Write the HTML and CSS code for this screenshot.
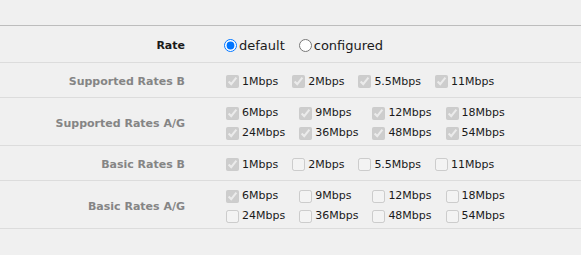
FILE: index.html
```html
<!DOCTYPE html>
<html lang="en">
<head>
  <meta charset="UTF-8">
  <meta name="viewport" content="width=device-width, initial-scale=1.0">
  <title>Rate Settings</title>
  <link rel="stylesheet" href="styles.css">
</head>
<body>
  <div class="panel">
    <div class="row row-rate">
      <div class="row-label label-dark">Rate</div>
      <div class="row-control">
        <label class="radio"><input type="radio" name="rate" checked>default</label>
        <label class="radio"><input type="radio" name="rate">configured</label>
      </div>
    </div>

    <div class="row">
      <div class="row-label">Supported Rates B</div>
      <div class="row-control">
        <label class="check"><input type="checkbox" checked disabled>1Mbps</label>
        <label class="check"><input type="checkbox" checked disabled>2Mbps</label>
        <label class="check"><input type="checkbox" checked disabled>5.5Mbps</label>
        <label class="check"><input type="checkbox" checked disabled>11Mbps</label>
      </div>
    </div>

    <div class="row">
      <div class="row-label">Supported Rates A/G</div>
      <div class="row-control rate-grid">
        <label class="check"><input type="checkbox" checked disabled>6Mbps</label>
        <label class="check"><input type="checkbox" checked disabled>9Mbps</label>
        <label class="check"><input type="checkbox" checked disabled>12Mbps</label>
        <label class="check"><input type="checkbox" checked disabled>18Mbps</label>
        <label class="check"><input type="checkbox" checked disabled>24Mbps</label>
        <label class="check"><input type="checkbox" checked disabled>36Mbps</label>
        <label class="check"><input type="checkbox" checked disabled>48Mbps</label>
        <label class="check"><input type="checkbox" checked disabled>54Mbps</label>
      </div>
    </div>

    <div class="row">
      <div class="row-label">Basic Rates B</div>
      <div class="row-control">
        <label class="check"><input type="checkbox" checked disabled>1Mbps</label>
        <label class="check"><input type="checkbox" disabled>2Mbps</label>
        <label class="check"><input type="checkbox" disabled>5.5Mbps</label>
        <label class="check"><input type="checkbox" disabled>11Mbps</label>
      </div>
    </div>

    <div class="row">
      <div class="row-label">Basic Rates A/G</div>
      <div class="row-control rate-grid">
        <label class="check"><input type="checkbox" checked disabled>6Mbps</label>
        <label class="check"><input type="checkbox" disabled>9Mbps</label>
        <label class="check"><input type="checkbox" disabled>12Mbps</label>
        <label class="check"><input type="checkbox" disabled>18Mbps</label>
        <label class="check"><input type="checkbox" disabled>24Mbps</label>
        <label class="check"><input type="checkbox" disabled>36Mbps</label>
        <label class="check"><input type="checkbox" disabled>48Mbps</label>
        <label class="check"><input type="checkbox" disabled>54Mbps</label>
      </div>
    </div>
  </div>
</body>
</html>
```

FILE: styles.css
```css
body {
  margin: 0;
  background-color: #f0f0f0;
  font-family: 'DejaVu Sans', Verdana, sans-serif;
  color: #1a1a1a;
}
.panel {
  margin-top: 25px;
  border-top: 1px solid #bdbdbd;
}
.row {
  display: flex;
  align-items: center;
  box-sizing: border-box;
  min-height: 35px;
  padding: 5px 0 2px;
  border-bottom: 1px solid #dcdcdc;
}
.row-rate {
  min-height: 37px;
}
.row-label {
  width: 185px;
  flex-shrink: 0;
  text-align: right;
  font-size: 11px;
  font-weight: bold;
  color: #858585;
}
.label-dark {
  color: #1a1a1a;
}
.row-control {
  margin-left: 37px;
  display: flex;
  align-items: center;
  gap: 10px;
}
.rate-grid {
  display: grid;
  grid-template-columns: repeat(4, auto);
  gap: 0 10px;
}
/* radio options */
.radio {
  display: flex;
  align-items: center;
  font-size: 13px;
  line-height: 20px;
  margin-right: 2px;
}
.radio input {
  width: 13px;
  height: 13px;
  margin: 0 2px 0 2px;
}
/* checkbox options */
.check {
  display: flex;
  align-items: center;
  font-size: 11px;
  line-height: 20px;
  color: #1a1a1a;
}
.check input {
  width: 13px;
  height: 13px;
  margin: 0 3px 0 4px;
}
```
